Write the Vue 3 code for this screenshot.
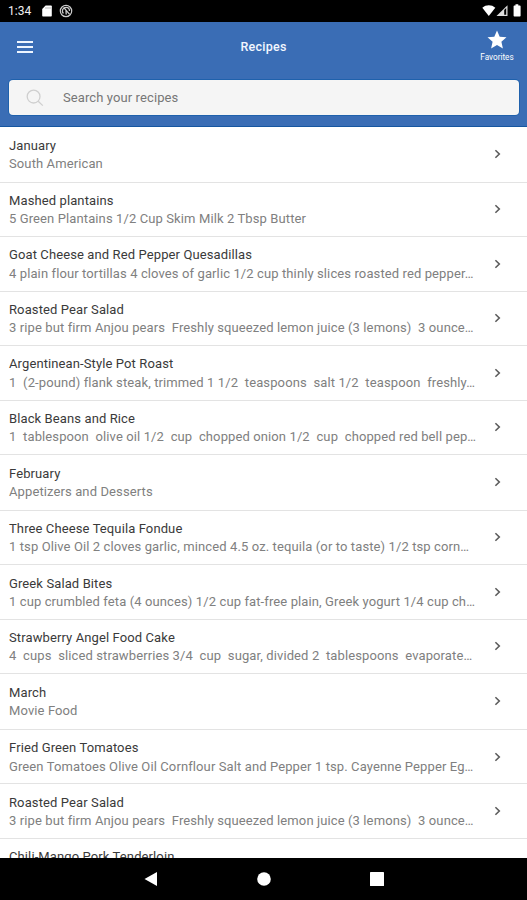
<script setup>
import { ref, computed } from 'vue'

const search = ref('')

const items = [
  { title: 'January', text: 'South American', section: true },
  { title: 'Mashed plantains', text: '5 Green Plantains 1/2 Cup Skim Milk 2 Tbsp Butter' },
  { title: 'Goat Cheese and Red Pepper Quesadillas', text: '4 plain flour tortillas 4 cloves of garlic 1/2 cup thinly slices roasted red pepper…' },
  { title: 'Roasted Pear Salad', text: '3 ripe but firm Anjou pears  Freshly squeezed lemon juice (3 lemons)  3 ounce…' },
  { title: 'Argentinean-Style Pot Roast', text: '1  (2-pound) flank steak, trimmed 1 1/2  teaspoons  salt 1/2  teaspoon  freshly…' },
  { title: 'Black Beans and Rice', text: '1  tablespoon  olive oil 1/2  cup  chopped onion 1/2  cup  chopped red bell pep…' },
  { title: 'February', text: 'Appetizers and Desserts', section: true },
  { title: 'Three Cheese Tequila Fondue', text: '1 tsp Olive Oil 2 cloves garlic, minced 4.5 oz. tequila (or to taste) 1/2 tsp corn…' },
  { title: 'Greek Salad Bites', text: '1 cup crumbled feta (4 ounces) 1/2 cup fat-free plain, Greek yogurt 1/4 cup ch…' },
  { title: 'Strawberry Angel Food Cake', text: '4  cups  sliced strawberries 3/4  cup  sugar, divided 2  tablespoons  evaporate…' },
  { title: 'March', text: 'Movie Food', section: true },
  { title: 'Fried Green Tomatoes', text: 'Green Tomatoes Olive Oil Cornflour Salt and Pepper 1 tsp. Cayenne Pepper Eg…' },
  { title: 'Roasted Pear Salad', text: '3 ripe but firm Anjou pears  Freshly squeezed lemon juice (3 lemons)  3 ounce…' },
  { title: 'Chili-Mango Pork Tenderloin', text: '' }
]

const filteredItems = computed(() => {
  const term = search.value.trim().toLowerCase()
  if (!term) return items
  return items.filter((item) => item.title.toLowerCase().includes(term))
})
</script>

<template>
  <div class="screen">
    <div class="status-bar">
      <span class="time">1:34</span>
      <svg class="sd" width="10" height="12" viewBox="0 0 10 12">
        <path d="M3.6 0.5H9a.8.8 0 0 1 .8.8v9.4a.8.8 0 0 1-.8.8H1a.8.8 0 0 1-.8-.8V3.9z" fill="#fff" />
        <path d="M4 2v2M6 2v2M8 2v2" stroke="#999" stroke-width=".7" />
      </svg>
      <svg class="sync" width="14" height="14" viewBox="0 0 14 14" fill="none" stroke="#ccc">
        <circle cx="7" cy="7" r="5.7" stroke-width="1.2" />
        <path d="M4.4 9.5A3.6 3.6 0 0 1 7 3.4c2 0 3.5 1.6 3.5 3.6M4.6 3.4l6 7M7 6l.2 4.5" stroke-width="1.3" />
      </svg>
      <svg class="signals" width="40" height="14" viewBox="0 0 40 14">
        <path d="M0.3 3.8C4 .5 9.6.5 13.3 3.8L6.8 12z" fill="#fff" />
        <path d="M14.5 12L25.5 1.2V12z" fill="#ddd" />
        <path d="M22.2 6.1l2-2V10.8h-2z" fill="#000" />
        <path d="M33.5.2h2.8v1.2h1.5q.8 0 .8.8v9.6q0 .8-.8.8H32.4q-.8 0-.8-.8V2.2q0-.8.8-.8h1.1z" fill="#fff" />
      </svg>
    </div>

    <header class="header">
      <div class="toolbar">
        <button class="menu" aria-label="Menu">
          <span></span>
          <span></span>
          <span></span>
        </button>
        <h1 class="title">Recipes</h1>
        <button class="favorites">
          <svg width="20" height="19" viewBox="0 0 20 19">
            <path d="M10 .5l2.7 6.2 6.8.6-5.1 4.5 1.5 6.7L10 15l-5.9 3.5 1.5-6.7L.5 7.3l6.8-.6z" fill="#fff" />
          </svg>
          <span>Favorites</span>
        </button>
      </div>
      <div class="search-box">
        <svg width="18" height="18" viewBox="0 0 18 18" fill="none" stroke="#cfcfcf" stroke-width="1.3">
          <circle cx="7.6" cy="7.6" r="6.4" />
          <path d="M12.2 12.2l4.6 4.4" />
        </svg>
        <input v-model="search" type="text" placeholder="Search your recipes" />
      </div>
    </header>

    <main class="list">
      <div
        v-for="(item, index) in filteredItems"
        :key="index"
        :class="['row', { section: item.section }]"
      >
        <div class="row-body">
          <div class="row-title">{{ item.title }}</div>
          <div class="row-text">{{ item.text }}</div>
        </div>
        <svg class="chevron" width="7" height="10" viewBox="0 0 7 10">
          <path d="M1.4 1.2l3.9 3.8-3.9 3.8" fill="none" stroke="#5c5c5c" stroke-width="1.6" />
        </svg>
      </div>
    </main>

    <nav class="nav-bar">
      <svg width="14" height="16" viewBox="0 0 14 16"><path d="M13 1v14L.5 8z" fill="#fff" /></svg>
      <svg width="14" height="14" viewBox="0 0 14 14"><circle cx="7" cy="7" r="6.8" fill="#fff" /></svg>
      <svg width="14" height="14" viewBox="0 0 14 14"><rect width="14" height="14" rx=".6" fill="#fff" /></svg>
    </nav>
  </div>
</template>

<style>
body {
  margin: 0;
  overflow: hidden;
}
</style>

<style scoped>
.screen {
  display: flex;
  flex-direction: column;
  height: 900px;
  background: #fff;
  font-family: Roboto, sans-serif;
  overflow: hidden;
}

.status-bar {
  display: flex;
  align-items: center;
  flex: none;
  box-sizing: border-box;
  height: 22px;
  padding: 0 5px 0 8px;
  background: #000;
  color: #f0f0f0;
}

.time {
  width: 34px;
  font-size: 12px;
}

.sync {
  margin-left: 7px;
}

.signals {
  margin-left: auto;
}

.header {
  flex: none;
  box-sizing: border-box;
  height: 105px;
  background: #3a6db5;
  border-bottom: 1px solid #1656a0;
}

.toolbar {
  display: grid;
  grid-template-columns: 60px 1fr 60px;
  height: 58px;
}

button {
  padding: 0;
  border: 0;
  background: none;
  color: #fff;
  font-family: inherit;
}

.menu {
  display: flex;
  flex-direction: column;
  gap: 3px;
  padding: 19px 0 0 17px;
}

.menu span {
  width: 16px;
  height: 2px;
  background: #edf5ff;
}

.title {
  margin: 0;
  padding-top: 17px;
  color: #f2f7ff;
  font-size: 12.5px;
  line-height: 16px;
  font-weight: 500;
  letter-spacing: 0.25px;
  text-align: center;
}

.favorites {
  display: flex;
  flex-direction: column;
  align-items: center;
  padding-top: 8px;
  font-size: 8.2px;
  line-height: 10px;
}

.favorites span {
  margin-top: 3px;
}

.search-box {
  display: flex;
  align-items: center;
  box-sizing: border-box;
  height: 35px;
  margin: 0 8px 0 9px;
  padding-left: 17px;
  border-radius: 4px;
  background: #f5f5f5;
  box-shadow: 0 0 0 1px #1f61ac;
}

.search-box input {
  flex: 1;
  margin-left: 19px;
  padding: 0;
  border: 0;
  outline: none;
  background: transparent;
  font-family: inherit;
  font-size: 13px;
  letter-spacing: 0.1px;
}

.search-box input::placeholder {
  color: #777;
}

.list {
  flex: 1;
  min-height: 0;
  overflow: hidden;
}

.row {
  display: flex;
  align-items: center;
  box-sizing: border-box;
  height: 54.5px;
  padding: 0 26px 0 9px;
  border-bottom: 1px solid #e3e3e3;
}

.row.section {
  height: 55.6px;
}

.row-body {
  flex: 1;
  min-width: 0;
  padding-top: 2px;
}

.row-title,
.row-text {
  height: 18.4px;
  line-height: 18.4px;
  font-size: 13px;
  letter-spacing: 0.11px;
  white-space: pre;
}

.row-title {
  color: #3a3a3a;
}

.row-text {
  color: #808080;
}

.chevron {
  flex: none;
}

.nav-bar {
  display: flex;
  align-items: center;
  justify-content: center;
  gap: 99px;
  flex: none;
  height: 42px;
  background: #000;
}
</style>
